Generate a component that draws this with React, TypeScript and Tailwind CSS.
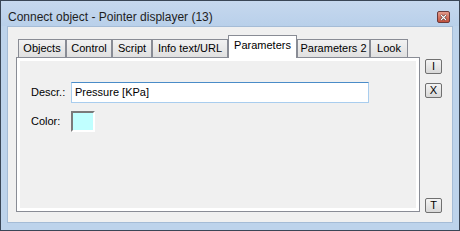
import React from 'react';

const tabs = [
  { label: 'Objects', w: 'w-[48px]' },
  { label: 'Control', w: 'w-[46px]' },
  { label: 'Script', w: 'w-[40px]' },
  { label: 'Info text/URL', w: 'w-[76px]' },
  { label: 'Parameters', w: 'w-[69px]', active: true },
  { label: 'Parameters 2', w: 'w-[73px]' },
  { label: 'Look', w: 'w-[38px]' },
];

const SideButton = ({ label }: { label: string }) => (
  <button className="w-[17px] h-[15px] flex items-center justify-center rounded-[2px] border border-[#707070] bg-gradient-to-b from-[#f4f4f4] to-[#d8d8d8] text-[11px] leading-none text-black">
    {label}
  </button>
);

export default function App() {
  return (
    <div
      className="w-[460px] h-[231px] flex flex-col border border-[#3a4656] bg-[#bdd3eb] text-black"
      style={{ fontFamily: '"Liberation Sans", Arial, sans-serif' }}
    >
      {/* Title bar */}
      <div className="h-[25px] flex items-start justify-between pl-[7px] pr-[9px] bg-gradient-to-b from-[#c6d8ee] to-[#b9d0ea]">
        <span className="text-[12px] leading-none pt-[10px] text-[#1e1e1e]">
          Connect object - Pointer displayer (13)
        </span>
        <div className="mt-[10px] w-[13px] h-[12px] rounded-[2px] border border-[#6b3a3a] bg-gradient-to-b from-[#e49a8a] to-[#c2503c] flex items-center justify-center">
          <svg width="7" height="7" viewBox="0 0 7 7">
            <path d="M1 1 L6 6 M6 1 L1 6" stroke="#3a1a1a" strokeWidth="2.4" />
            <path d="M1 1 L6 6 M6 1 L1 6" stroke="#ffffff" strokeWidth="1.2" />
          </svg>
        </div>
      </div>

      {/* Client */}
      <div className="flex-1 mx-[6px] mb-[7px] flex bg-[#f0f0f0] border border-[#a5bcd6] pl-[8px] pt-[8px] pb-[10px]">
        {/* Tab control */}
        <div className="w-[404px] flex flex-col">
          <div className="h-[22px] flex items-end pl-[2px] relative z-10">
            {tabs.map((t) =>
              t.active ? (
                <div
                  key={t.label}
                  className={`${t.w} h-[23px] -mb-[1px] flex items-start justify-center pt-[4px] border border-b-0 border-[#898c95] bg-white text-[11px] leading-none`}
                >
                  {t.label}
                </div>
              ) : (
                <div
                  key={t.label}
                  className={`${t.w} h-[18px] flex items-center justify-center border border-[#898c95] border-b-0 bg-gradient-to-b from-[#f2f2f2] to-[#e0e0e0] text-[11px] leading-none`}
                >
                  {t.label}
                </div>
              )
            )}
          </div>
          <div className="flex-1 border border-[#898c95] p-[3px] bg-white">
            <div className="h-full bg-[#f0f0f0] pl-[11px] pt-[21px] text-[11px]">
              <div className="flex items-center h-[21px]">
                <span className="w-[40px]">Descr.:</span>
                <div className="w-[298px] h-[21px] flex items-center px-[3px] bg-white border border-[#a9cdee] border-t-[#4a8cc8]">
                  Pressure [KPa]
                </div>
              </div>
              <div className="flex items-center h-[21px] mt-[8px]">
                <span className="w-[40px]">Color:</span>
                <div className="w-[24px] h-[21px] bg-[#c0ffff] border-2 border-t-[#7a7a7a] border-l-[#7a7a7a] border-b-white border-r-white" />
              </div>
            </div>
          </div>
        </div>

        {/* Right buttons */}
        <div className="ml-[5px] w-[17px] flex flex-col pt-[24px]">
          <div className="flex flex-col gap-[9px]">
            <SideButton label="I" />
            <SideButton label="X" />
          </div>
          <div className="flex-1" />
          <div className="-mb-[1px]">
            <SideButton label="T" />
          </div>
        </div>
      </div>
    </div>
  );
}
